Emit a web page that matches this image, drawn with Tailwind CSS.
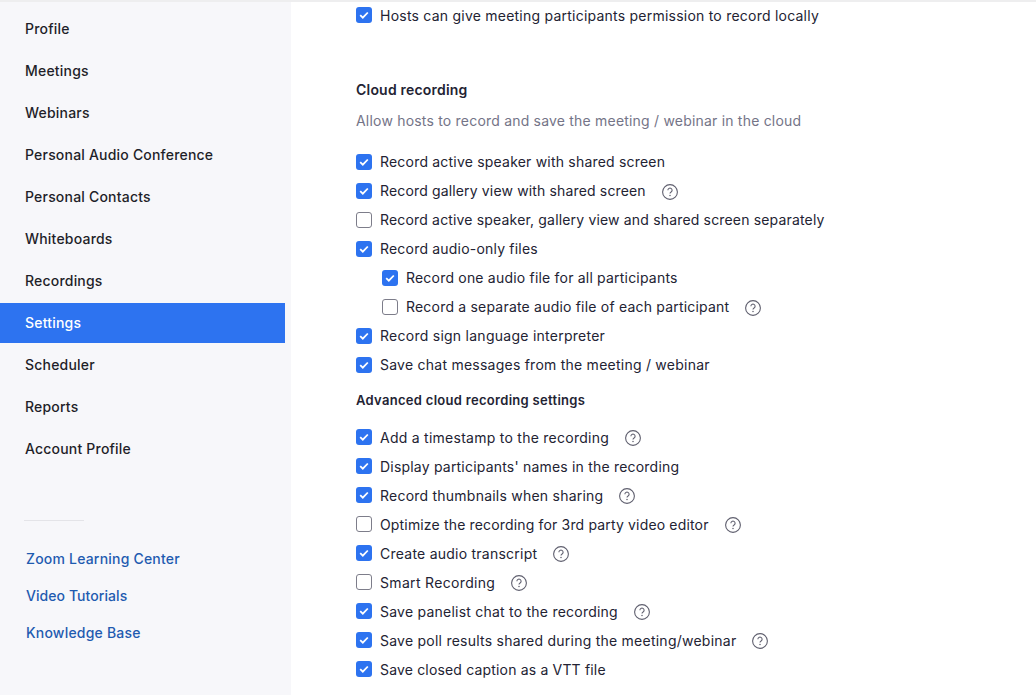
<!DOCTYPE html>
<html lang="en">
<head>
  <meta charset="UTF-8" />
  <title>Settings</title>
  <script src="https://cdn.jsdelivr.net/npm/@tailwindcss/browser@4"></script>
</head>
<body class="h-[695px] w-[1036px] overflow-hidden bg-white font-['Inter',sans-serif] text-[14px] tracking-[0.2px] text-[#232333]">
  <div class="h-[2px] bg-[#eeeeef]"></div>
  <div class="flex h-[693px]">

    <!-- Sidebar -->
    <aside class="w-[291px] shrink-0 bg-[#f7f7fa] pt-[7px] pr-[6px]">
      <nav class="flex flex-col gap-[2px] font-medium text-[#1f1f29]">
        <a class="flex h-10 items-center pb-[2px] pl-[25px]">Profile</a>
        <a class="flex h-10 items-center pb-[2px] pl-[25px]">Meetings</a>
        <a class="flex h-10 items-center pb-[2px] pl-[25px]">Webinars</a>
        <a class="flex h-10 items-center pb-[2px] pl-[25px]">Personal Audio Conference</a>
        <a class="flex h-10 items-center pb-[2px] pl-[25px]">Personal Contacts</a>
        <a class="flex h-10 items-center pb-[2px] pl-[25px]">Whiteboards</a>
        <a class="flex h-10 items-center pb-[2px] pl-[25px]">Recordings</a>
        <a class="flex h-10 items-center bg-[#2d73f0] pb-[2px] pl-[25px] text-white">Settings</a>
        <a class="flex h-10 items-center pb-[2px] pl-[25px]">Scheduler</a>
        <a class="flex h-10 items-center pb-[2px] pl-[25px]">Reports</a>
        <a class="flex h-10 items-center pb-[2px] pl-[25px]">Account Profile</a>
      </nav>
      <div class="mt-[51px] ml-6 h-px w-[60px] bg-[#e4e4e8]"></div>
      <div class="mt-[19px] flex flex-col font-medium text-[#1f5bb0]">
        <a class="flex h-[37px] items-center pl-[26px]">Zoom Learning Center</a>
        <a class="flex h-[37px] items-center pl-[26px] tracking-[0.07px]">Video Tutorials</a>
        <a class="flex h-[37px] items-center pl-[26px]">Knowledge Base</a>
      </div>
    </aside>

    <!-- Settings content -->
    <main class="flex-1 pl-[65px]">
      <label class="flex h-[26px] items-center gap-2 tracking-[0.23px]"><svg class="h-4 w-4 shrink-0" viewBox="0 0 16 16"><rect width="16" height="16" rx="3" fill="#2d73f0"/><path d="M4.2 8.2l2.6 2.5 5-5.2" fill="none" stroke="#fff" stroke-width="1.8"/></svg>Hosts can give meeting participants permission to record locally</label>

      <h2 class="mt-[51px] font-semibold">Cloud recording</h2>
      <p class="mt-[10px] text-[#747487]">Allow hosts to record and save the meeting / webinar in the cloud</p>

      <div class="mt-[16px]">
        <label class="flex h-[29px] items-center gap-2"><svg class="h-4 w-4 shrink-0" viewBox="0 0 16 16"><rect width="16" height="16" rx="3" fill="#2d73f0"/><path d="M4.2 8.2l2.6 2.5 5-5.2" fill="none" stroke="#fff" stroke-width="1.8"/></svg>Record active speaker with shared screen</label>
        <label class="flex h-[29px] items-center gap-2 tracking-[0.15px]"><svg class="h-4 w-4 shrink-0" viewBox="0 0 16 16"><rect width="16" height="16" rx="3" fill="#2d73f0"/><path d="M4.2 8.2l2.6 2.5 5-5.2" fill="none" stroke="#fff" stroke-width="1.8"/></svg>Record gallery view with shared screen<svg class="mt-[2px] ml-2 h-4 w-4 shrink-0" viewBox="0 0 16 16"><circle cx="8" cy="8" r="7.4" fill="none" stroke="#5f5f6e" stroke-width="1.1"/><path d="M5.9 6.2a2.1 2.1 0 1 1 3.2 1.8c-.8.5-1.1.9-1.1 1.6" fill="none" stroke="#5f5f6e" stroke-width="1.1"/><circle cx="8" cy="11.6" r=".75" fill="#5f5f6e"/></svg></label>
        <label class="flex h-[29px] items-center gap-2 tracking-[0.17px]"><span class="h-4 w-4 shrink-0 rounded-[3px] border border-[#7d7d8a] bg-white"></span>Record active speaker, gallery view and shared screen separately</label>
        <label class="flex h-[29px] items-center gap-2"><svg class="h-4 w-4 shrink-0" viewBox="0 0 16 16"><rect width="16" height="16" rx="3" fill="#2d73f0"/><path d="M4.2 8.2l2.6 2.5 5-5.2" fill="none" stroke="#fff" stroke-width="1.8"/></svg>Record audio-only files</label>
        <label class="flex h-[29px] items-center gap-2 pl-[26px]"><svg class="h-4 w-4 shrink-0" viewBox="0 0 16 16"><rect width="16" height="16" rx="3" fill="#2d73f0"/><path d="M4.2 8.2l2.6 2.5 5-5.2" fill="none" stroke="#fff" stroke-width="1.8"/></svg>Record one audio file for all participants</label>
        <label class="flex h-[29px] items-center gap-2 pl-[26px]"><span class="h-4 w-4 shrink-0 rounded-[3px] border border-[#7d7d8a] bg-white"></span>Record a separate audio file of each participant<svg class="mt-[2px] ml-2 h-4 w-4 shrink-0" viewBox="0 0 16 16"><circle cx="8" cy="8" r="7.4" fill="none" stroke="#5f5f6e" stroke-width="1.1"/><path d="M5.9 6.2a2.1 2.1 0 1 1 3.2 1.8c-.8.5-1.1.9-1.1 1.6" fill="none" stroke="#5f5f6e" stroke-width="1.1"/><circle cx="8" cy="11.6" r=".75" fill="#5f5f6e"/></svg></label>
        <label class="flex h-[29px] items-center gap-2 tracking-[0.26px]"><svg class="h-4 w-4 shrink-0" viewBox="0 0 16 16"><rect width="16" height="16" rx="3" fill="#2d73f0"/><path d="M4.2 8.2l2.6 2.5 5-5.2" fill="none" stroke="#fff" stroke-width="1.8"/></svg>Record sign language interpreter</label>
        <label class="flex h-[29px] items-center gap-2 tracking-[0.24px]"><svg class="h-4 w-4 shrink-0" viewBox="0 0 16 16"><rect width="16" height="16" rx="3" fill="#2d73f0"/><path d="M4.2 8.2l2.6 2.5 5-5.2" fill="none" stroke="#fff" stroke-width="1.8"/></svg>Save chat messages from the meeting / webinar</label>
      </div>

      <h3 class="mt-[12px] text-[13px] font-semibold tracking-[0.3px]">Advanced cloud recording settings</h3>

      <div class="mt-[12px]">
        <label class="flex h-[29px] items-center gap-2 tracking-[0.26px]"><svg class="h-4 w-4 shrink-0" viewBox="0 0 16 16"><rect width="16" height="16" rx="3" fill="#2d73f0"/><path d="M4.2 8.2l2.6 2.5 5-5.2" fill="none" stroke="#fff" stroke-width="1.8"/></svg>Add a timestamp to the recording<svg class="mt-[2px] ml-2 h-4 w-4 shrink-0" viewBox="0 0 16 16"><circle cx="8" cy="8" r="7.4" fill="none" stroke="#5f5f6e" stroke-width="1.1"/><path d="M5.9 6.2a2.1 2.1 0 1 1 3.2 1.8c-.8.5-1.1.9-1.1 1.6" fill="none" stroke="#5f5f6e" stroke-width="1.1"/><circle cx="8" cy="11.6" r=".75" fill="#5f5f6e"/></svg></label>
        <label class="flex h-[29px] items-center gap-2"><svg class="h-4 w-4 shrink-0" viewBox="0 0 16 16"><rect width="16" height="16" rx="3" fill="#2d73f0"/><path d="M4.2 8.2l2.6 2.5 5-5.2" fill="none" stroke="#fff" stroke-width="1.8"/></svg>Display participants' names in the recording</label>
        <label class="flex h-[29px] items-center gap-2 tracking-[0.23px]"><svg class="h-4 w-4 shrink-0" viewBox="0 0 16 16"><rect width="16" height="16" rx="3" fill="#2d73f0"/><path d="M4.2 8.2l2.6 2.5 5-5.2" fill="none" stroke="#fff" stroke-width="1.8"/></svg>Record thumbnails when sharing<svg class="mt-[2px] ml-2 h-4 w-4 shrink-0" viewBox="0 0 16 16"><circle cx="8" cy="8" r="7.4" fill="none" stroke="#5f5f6e" stroke-width="1.1"/><path d="M5.9 6.2a2.1 2.1 0 1 1 3.2 1.8c-.8.5-1.1.9-1.1 1.6" fill="none" stroke="#5f5f6e" stroke-width="1.1"/><circle cx="8" cy="11.6" r=".75" fill="#5f5f6e"/></svg></label>
        <label class="flex h-[29px] items-center gap-2 tracking-[0.16px]"><span class="h-4 w-4 shrink-0 rounded-[3px] border border-[#7d7d8a] bg-white"></span>Optimize the recording for 3rd party video editor<svg class="mt-[2px] ml-2 h-4 w-4 shrink-0" viewBox="0 0 16 16"><circle cx="8" cy="8" r="7.4" fill="none" stroke="#5f5f6e" stroke-width="1.1"/><path d="M5.9 6.2a2.1 2.1 0 1 1 3.2 1.8c-.8.5-1.1.9-1.1 1.6" fill="none" stroke="#5f5f6e" stroke-width="1.1"/><circle cx="8" cy="11.6" r=".75" fill="#5f5f6e"/></svg></label>
        <label class="flex h-[29px] items-center gap-2 tracking-[0.24px]"><svg class="h-4 w-4 shrink-0" viewBox="0 0 16 16"><rect width="16" height="16" rx="3" fill="#2d73f0"/><path d="M4.2 8.2l2.6 2.5 5-5.2" fill="none" stroke="#fff" stroke-width="1.8"/></svg>Create audio transcript<svg class="mt-[2px] ml-2 h-4 w-4 shrink-0" viewBox="0 0 16 16"><circle cx="8" cy="8" r="7.4" fill="none" stroke="#5f5f6e" stroke-width="1.1"/><path d="M5.9 6.2a2.1 2.1 0 1 1 3.2 1.8c-.8.5-1.1.9-1.1 1.6" fill="none" stroke="#5f5f6e" stroke-width="1.1"/><circle cx="8" cy="11.6" r=".75" fill="#5f5f6e"/></svg></label>
        <label class="flex h-[29px] items-center gap-2 tracking-[0.33px]"><span class="h-4 w-4 shrink-0 rounded-[3px] border border-[#7d7d8a] bg-white"></span>Smart Recording<svg class="mt-[2px] ml-2 h-4 w-4 shrink-0" viewBox="0 0 16 16"><circle cx="8" cy="8" r="7.4" fill="none" stroke="#5f5f6e" stroke-width="1.1"/><path d="M5.9 6.2a2.1 2.1 0 1 1 3.2 1.8c-.8.5-1.1.9-1.1 1.6" fill="none" stroke="#5f5f6e" stroke-width="1.1"/><circle cx="8" cy="11.6" r=".75" fill="#5f5f6e"/></svg></label>
        <label class="flex h-[29px] items-center gap-2 tracking-[0.23px]"><svg class="h-4 w-4 shrink-0" viewBox="0 0 16 16"><rect width="16" height="16" rx="3" fill="#2d73f0"/><path d="M4.2 8.2l2.6 2.5 5-5.2" fill="none" stroke="#fff" stroke-width="1.8"/></svg>Save panelist chat to the recording<svg class="mt-[2px] ml-2 h-4 w-4 shrink-0" viewBox="0 0 16 16"><circle cx="8" cy="8" r="7.4" fill="none" stroke="#5f5f6e" stroke-width="1.1"/><path d="M5.9 6.2a2.1 2.1 0 1 1 3.2 1.8c-.8.5-1.1.9-1.1 1.6" fill="none" stroke="#5f5f6e" stroke-width="1.1"/><circle cx="8" cy="11.6" r=".75" fill="#5f5f6e"/></svg></label>
        <label class="flex h-[29px] items-center gap-2 tracking-[0.24px]"><svg class="h-4 w-4 shrink-0" viewBox="0 0 16 16"><rect width="16" height="16" rx="3" fill="#2d73f0"/><path d="M4.2 8.2l2.6 2.5 5-5.2" fill="none" stroke="#fff" stroke-width="1.8"/></svg>Save poll results shared during the meeting/webinar<svg class="mt-[2px] ml-2 h-4 w-4 shrink-0" viewBox="0 0 16 16"><circle cx="8" cy="8" r="7.4" fill="none" stroke="#5f5f6e" stroke-width="1.1"/><path d="M5.9 6.2a2.1 2.1 0 1 1 3.2 1.8c-.8.5-1.1.9-1.1 1.6" fill="none" stroke="#5f5f6e" stroke-width="1.1"/><circle cx="8" cy="11.6" r=".75" fill="#5f5f6e"/></svg></label>
        <label class="flex h-[29px] items-center gap-2 tracking-[0.17px]"><svg class="h-4 w-4 shrink-0" viewBox="0 0 16 16"><rect width="16" height="16" rx="3" fill="#2d73f0"/><path d="M4.2 8.2l2.6 2.5 5-5.2" fill="none" stroke="#fff" stroke-width="1.8"/></svg>Save closed caption as a VTT file</label>
      </div>
    </main>
  </div>
</body>
</html>
